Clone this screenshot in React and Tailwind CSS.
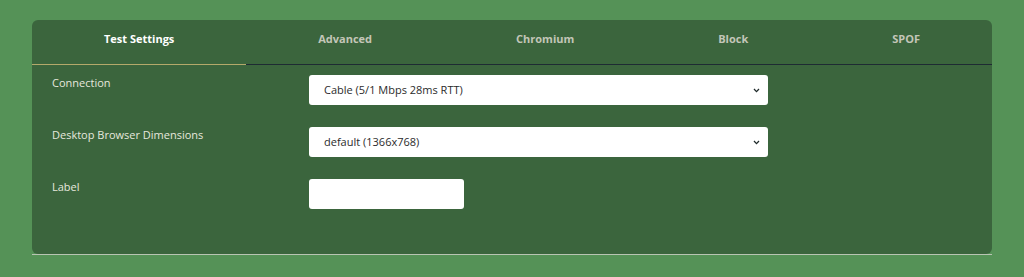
const TABS = [
  { key: "test", label: "Test Settings", active: true },
  { key: "advanced", label: "Advanced" },
  { key: "chromium", label: "Chromium" },
  { key: "block", label: "Block" },
  { key: "spof", label: "SPOF" },
];

function Chevron() {
  return (
    <svg width="7" height="5" viewBox="0 0 7 5" className="text-[#1f2a2a]">
      <path d="M1 1 L3.5 3.6 L6 1" fill="none" stroke="currentColor" strokeWidth="1.3" />
    </svg>
  );
}

function SelectBox({ value }) {
  return (
    <div className="flex h-[30px] w-[459px] items-center justify-between rounded-[3px] bg-white pl-[15px] pr-[8px] text-[11px] text-[#2b2b2b]">
      <span>{value}</span>
      <Chevron />
    </div>
  );
}

export default function App() {
  return (
    <div
      className="min-h-[277px] w-full bg-[#559257] px-8 pt-5"
      style={{ fontFamily: '"Open Sans", "Liberation Sans", sans-serif' }}
    >
      <div className="border-b border-[#b9c4b3]">
        <div className="h-[234px] rounded-md bg-[#3b653d]">
          {/* Tabs */}
          <div className="flex">
            {TABS.map((tab) => (
              <div
                key={tab.key}
                className={`flex h-[45px] flex-auto items-center justify-center border-b pb-[6px] text-[11px] font-bold ${
                  tab.active ? "border-[#b4a96b] text-white" : "border-[#1e2b33] text-[#c3c6b8]"
                }`}
              >
                {tab.label}
              </div>
            ))}
          </div>

          {/* Form rows */}
          <div className="flex flex-col gap-[22px] pt-[10px]">
            <div className="flex">
              <div className="w-[277px] pl-5 text-[11px] text-[#e6e8de]">Connection</div>
              <SelectBox value="Cable (5/1 Mbps 28ms RTT)" />
            </div>
            <div className="flex">
              <div className="w-[277px] pl-5 text-[11px] text-[#e6e8de]">Desktop Browser Dimensions</div>
              <SelectBox value="default (1366x768)" />
            </div>
            <div className="flex">
              <div className="w-[277px] pl-5 text-[11px] text-[#e6e8de]">Label</div>
              <input className="h-[30px] w-[155px] rounded-[3px] bg-white px-3 text-[11px] outline-none" />
            </div>
          </div>
        </div>
      </div>
    </div>
  );
}
